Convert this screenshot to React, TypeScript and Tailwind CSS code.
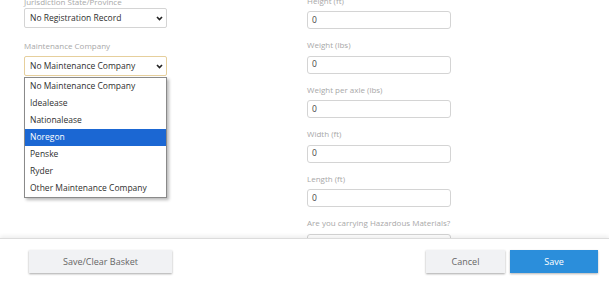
const MAINTENANCE_OPTIONS = [
  "No Maintenance Company",
  "Idealease",
  "Nationalease",
  "Noregon",
  "Penske",
  "Ryder",
  "Other Maintenance Company",
];

const RIGHT_FIELDS = [
  "Height (ft)",
  "Weight (lbs)",
  "Weight per axle (lbs)",
  "Width (ft)",
  "Length (ft)",
  "Are you carrying Hazardous Materials?",
];

function Chevron() {
  return (
    <svg width="7" height="5" viewBox="0 0 7 5" className="shrink-0">
      <path d="M1 1 L3.5 3.6 L6 1" fill="none" stroke="#222" strokeWidth="1.6" />
    </svg>
  );
}

function FakeSelect({ value, focused }: { value: string; focused?: boolean }) {
  return (
    <div
      className={`flex h-[20px] items-center justify-between rounded-[2px] border bg-white pl-[5px] pr-[3px] text-[8.5px] text-[#2f2f2f] ${
        focused ? "border-[#e6cf9c]" : "border-[#d4d4d4]"
      }`}
    >
      <span>{value}</span>
      <Chevron />
    </div>
  );
}

export default function App() {
  return (
    <div className="relative h-[282px] w-[609px] overflow-hidden bg-white font-['Open_Sans',sans-serif]">
      <div className="flex h-[238px] overflow-hidden">
        {/* left column */}
        <div className="ml-[24px] w-[143px]">
          <p className="-mt-[4px] h-[11px] text-[8px] leading-[11px] text-[#a8a8a8]">
            Jurisdiction State/Province
          </p>
          <div className="mt-[1px]">
            <FakeSelect value="No Registration Record" />
          </div>
          <p className="mt-[11.5px] h-[11px] text-[8px] leading-[11px] text-[#a8a8a8]">
            Maintenance Company
          </p>
          <div className="relative mt-[5.5px]">
            <FakeSelect value="No Maintenance Company" focused />
            <ul className="absolute left-0 top-[21px] z-10 w-[143px] border border-[#8a8a8a] bg-white shadow-[2px_2px_3px_rgba(0,0,0,0.28)]">
              {MAINTENANCE_OPTIONS.map((opt) => (
                <li
                  key={opt}
                  className={`flex h-[17px] items-center pl-[5px] text-[8.5px] ${
                    opt === "Noregon" ? "bg-[#1b67d3] text-white" : "text-[#2f2f2f]"
                  }`}
                >
                  {opt}
                </li>
              ))}
            </ul>
          </div>
        </div>

        {/* right column */}
        <div className="ml-[140px] w-[144px]">
          <div className="-mt-[5.5px]">
            {RIGHT_FIELDS.map((label) => (
              <div key={label} className="mb-[10px]">
                <p className="h-[11px] whitespace-nowrap text-[8px] leading-[11px] text-[#a8a8a8]">
                  {label}
                </p>
                <div className="mt-[5.5px] flex h-[18px] items-center rounded-[3px] border border-[#d4d4d4] bg-white pl-[4px] text-[8.5px] text-[#444]">
                  {label.startsWith("Are") ? "" : "0"}
                </div>
              </div>
            ))}
          </div>
        </div>
      </div>

      {/* footer */}
      <div className="relative flex h-[44px] items-start justify-between border-t border-[#dcdcdc] bg-white pl-[29px] pr-[11px] pt-[11px] shadow-[0_-2px_4px_rgba(0,0,0,0.07)]">
        <button className="h-[23px] w-[143px] bg-[#f1f2f4] text-[9px] text-[#666] shadow-[0_1px_2px_rgba(0,0,0,0.35)]">
          Save/Clear Basket
        </button>
        <div className="flex gap-[5px]">
          <button className="h-[23px] w-[79px] bg-[#f1f2f4] text-[9px] text-[#666] shadow-[0_1px_2px_rgba(0,0,0,0.35)]">
            Cancel
          </button>
          <button className="h-[23px] w-[88px] bg-[#2b8edb] text-[9px] text-white shadow-[0_1px_2px_rgba(0,0,0,0.3)]">
            Save
          </button>
        </div>
      </div>
    </div>
  );
}
